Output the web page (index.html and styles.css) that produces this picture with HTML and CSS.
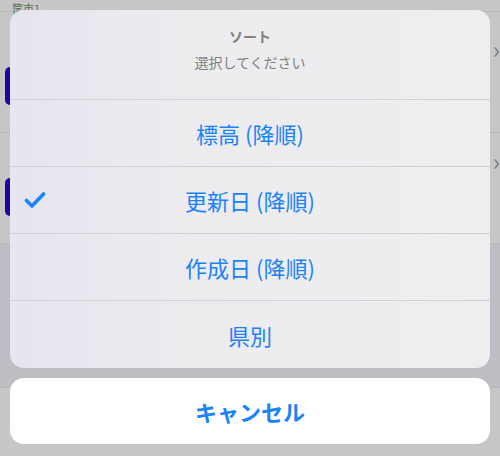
FILE: index.html
```html
<!DOCTYPE html>
<html lang="ja">
<head>
    <meta charset="UTF-8">
    <meta name="viewport" content="width=device-width, initial-scale=1.0">
    <title>ソート</title>
    <link rel="stylesheet" href="styles.css">
</head>
<body>

    <!-- 背景のリスト (暗くなっている) -->
    <div class="backdrop">
        <div class="bg-head"><span class="bg-title">筐市1</span></div>
        <div class="bg-row row-a">
            <span class="bg-mark mark-a"></span>
            <span class="bg-chev chev-a">&#x203A;</span>
        </div>
        <div class="bg-row">
            <span class="bg-mark mark-b"></span>
            <span class="bg-chev chev-b">&#x203A;</span>
        </div>
        <div class="bg-row bg-dark"></div>
        <div class="bg-row bg-foot"></div>
    </div>

    <!-- アクションシート -->
    <div class="overlay">
        <div class="sheet">
            <div class="sheet-head">
                <div class="sheet-title">ソート</div>
                <div class="sheet-sub">選択してください</div>
            </div>
            <div class="sheet-item">標高 (降順)</div>
            <div class="sheet-item">
                <svg class="check" width="22" height="18" viewBox="0 0 22 18">
                    <polyline points="2.5,9.5 8,15 19.5,3" fill="none" stroke="#1a82fb" stroke-width="3.6" stroke-linecap="round" stroke-linejoin="round"/>
                </svg>
                更新日 (降順)
            </div>
            <div class="sheet-item">作成日 (降順)</div>
            <div class="sheet-item">県別</div>
        </div>
        <div class="cancel">キャンセル</div>
    </div>

</body>
</html>
```

FILE: styles.css
```css
/* Reset */
* {
    margin: 0;
    padding: 0;
    box-sizing: border-box;
}

body {
    width: 500px;
    height: 456px;
    overflow: hidden;
    position: relative;
    font-family: "Noto Sans CJK JP", "Noto Sans", sans-serif;
    background-color: #c6c6c7;
}

/* Background list */
.backdrop {
    display: flex;
    flex-direction: column;
    height: 100%;
}

.bg-head {
    height: 12px;
    border-bottom: 1px solid #b7b7b7;
    padding-left: 12px;
}

.bg-title {
    display: block;
    font-size: 11px;
    line-height: 11px;
    padding-top: 3px;
    color: #5c7256;
}

.bg-row {
    position: relative;
    height: 111px;
    border-bottom: 1px solid #b7b7b7;
}

.row-a {
    height: 121px;
}

.bg-dark {
    height: 144px;
    background-color: #bebdc3;
}

.bg-foot {
    flex: 1;
    border-bottom: none;
}

.bg-mark {
    position: absolute;
    left: 5px;
    width: 8px;
    height: 38px;
    border-radius: 5px 0 0 5px;
    background-color: #1b06a6;
}

.mark-a { top: 55px; }
.mark-b { top: 45px; }

.bg-chev {
    position: absolute;
    right: 0;
    font-size: 24px;
    line-height: 20px;
    color: #7c7c7c;
}

.chev-a { top: 27px; }
.chev-b { top: 18px; }

/* Overlay */
.overlay {
    position: absolute;
    inset: 0;
    padding: 10px;
    display: flex;
    flex-direction: column;
    gap: 10px;
}

.sheet {
    border-radius: 14px;
    overflow: hidden;
    background: linear-gradient(to right, #e6e5f0, #ececef 35%, #eeeeef);
}

.sheet-head {
    height: 90px;
    padding-top: 16px;
    text-align: center;
    border-bottom: 1px solid #d1d1d5;
}

.sheet-title {
    font-size: 14px;
    font-weight: bold;
    line-height: 20px;
    color: #7f7f80;
}

.sheet-sub {
    margin-top: 6px;
    font-size: 14px;
    line-height: 20px;
    color: #7f7f80;
}

.sheet-item {
    position: relative;
    height: 67px;
    display: flex;
    align-items: center;
    justify-content: center;
    font-size: 22px;
    color: #1a82fb;
    border-bottom: 1px solid #d1d1d5;
}

.sheet-item:last-child {
    border-bottom: none;
}

.check {
    position: absolute;
    left: 14px;
    top: 24px;
}

.cancel {
    height: 66px;
    border-radius: 14px;
    background-color: #fff;
    display: flex;
    align-items: center;
    justify-content: center;
    font-size: 22px;
    font-weight: bold;
    color: #1a82fb;
}
```
